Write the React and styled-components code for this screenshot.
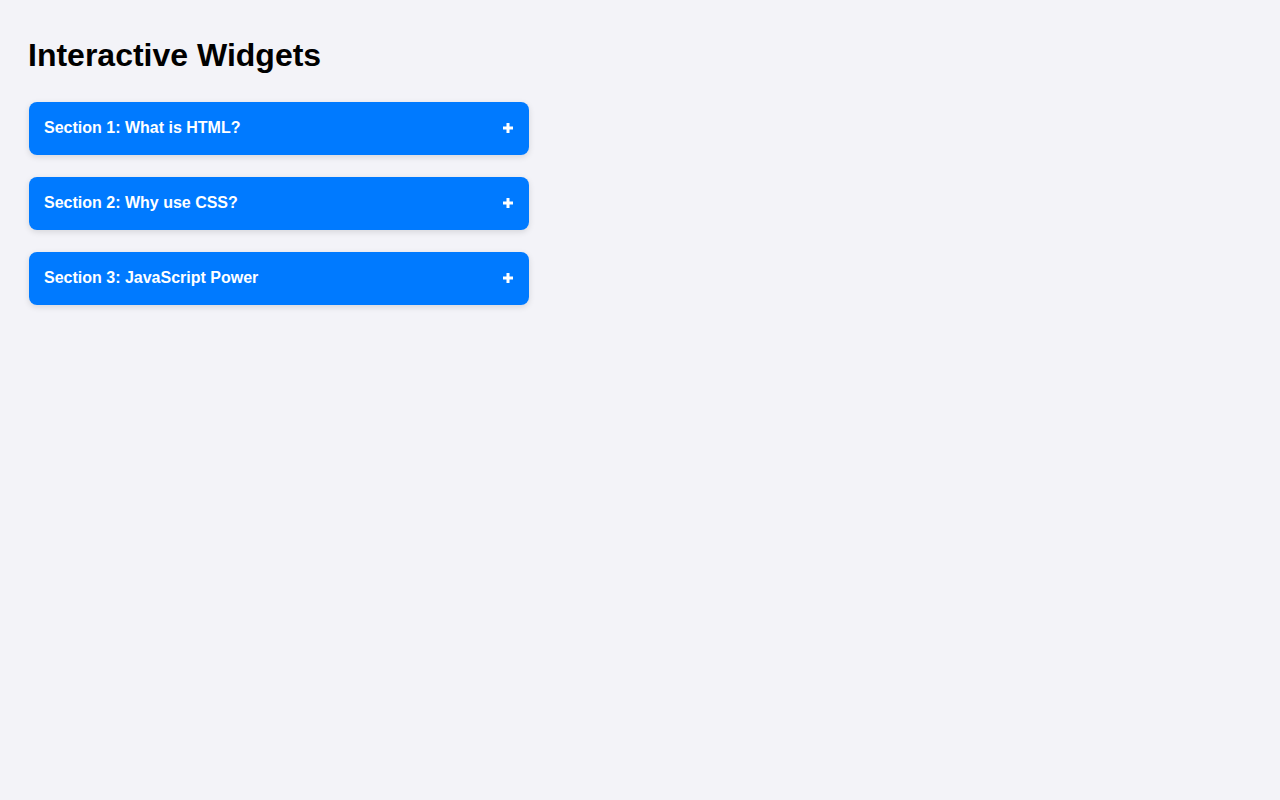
import React, { useState } from "react";
import styled, { createGlobalStyle } from "styled-components";

const Global = createGlobalStyle`
  html, body { margin: 0; padding: 0; background: #f3f3f8; }
  body { font-family: "Liberation Sans", Arial, Helvetica, sans-serif; }
`;

const Page = styled.div`
  padding: 23px 28px;
`;

const Title = styled.h1`
  font-size: 32px;
  font-weight: 700;
  color: #000;
  margin: 13px 0 28px;
  line-height: 1.2;
`;

const List = styled.div`
  display: flex;
  flex-direction: column;
  gap: 22px;
  width: 500px;
  margin-left: 1px;
`;

const Item = styled.div`
  border-radius: 8px;
  box-shadow: 0 2px 6px rgba(0, 0, 0, 0.12);
  overflow: hidden;
`;

const Header = styled.button`
  width: 100%;
  height: 53px;
  display: flex;
  align-items: center;
  justify-content: space-between;
  padding: 0 15px 2px 15px;
  border: none;
  background: #007aff;
  color: #fff;
  font-family: inherit;
  font-size: 16px;
  font-weight: 700;
  cursor: pointer;
  text-align: left;
`;

const PlusIcon = styled.svg`
  width: 10px;
  height: 10px;
  margin-right: 1px;
  flex-shrink: 0;
`;

const Body = styled.div`
  background: #fff;
  padding: 15px;
  font-size: 15px;
  color: #333;
`;

const sections = [
  { title: "Section 1: What is HTML?", body: "HTML is the standard markup language for web pages." },
  { title: "Section 2: Why use CSS?", body: "CSS describes how HTML elements are displayed." },
  { title: "Section 3: JavaScript Power", body: "JavaScript makes web pages interactive." },
];

function Plus({ open }) {
  return (
    <PlusIcon viewBox="0 0 10 10" aria-hidden="true">
      <rect x="0" y="3.5" width="10" height="3" fill="#fff" />
      {!open && <rect x="3.5" y="0" width="3" height="10" fill="#fff" />}
    </PlusIcon>
  );
}

export default function App() {
  const [open, setOpen] = useState(-1);
  return (
    <>
      <Global />
      <Page>
        <Title>Interactive Widgets</Title>
        <List>
          {sections.map((s, i) => (
            <Item key={i}>
              <Header onClick={() => setOpen(open === i ? -1 : i)}>
                <span>{s.title}</span>
                <Plus open={open === i} />
              </Header>
              {open === i && <Body>{s.body}</Body>}
            </Item>
          ))}
        </List>
      </Page>
    </>
  );
}
